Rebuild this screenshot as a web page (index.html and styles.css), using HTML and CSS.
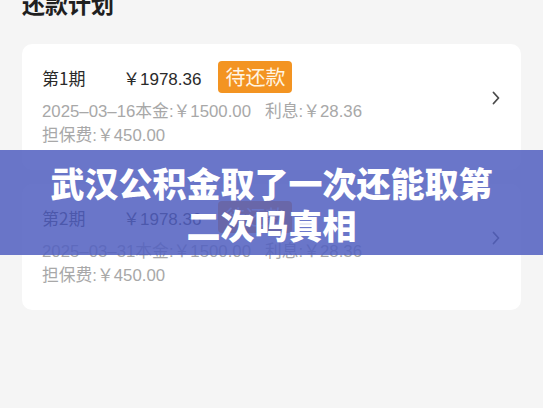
FILE: index.html
```html
<!DOCTYPE html>
<html lang="zh-CN">
<head>
    <meta charset="UTF-8">
    <meta name="viewport" content="width=device-width, initial-scale=1.0">
    <title>还款计划</title>
    <link rel="stylesheet" href="styles.css">
</head>
<body>

<main class="page">
    <h1 class="page-title">还款计划</h1>

    <!-- Repayment plan list -->
    <div class="plan-list">
        <div class="plan-card">
            <div class="plan-info">
                <div class="plan-head">
                    <span class="plan-period">第1期</span>
                    <span class="plan-amount">￥1978.36</span>
                    <span class="plan-badge">待还款</span>
                </div>
                <p class="plan-detail">2025–03–16本金:￥1500.00&nbsp;&nbsp;&nbsp;利息:￥28.36</p>
                <p class="plan-detail">担保费:￥450.00</p>
            </div>
            <svg class="chevron" width="10" height="16" viewBox="0 0 10 16">
                <path d="M2.5 2.5 L7.5 8 L2.5 13.5" fill="none" stroke="#4a4a4a" stroke-width="1.8" stroke-linecap="round" stroke-linejoin="round"/>
            </svg>
        </div>

        <div class="plan-card">
            <div class="plan-info">
                <div class="plan-head">
                    <span class="plan-period">第2期</span>
                    <span class="plan-amount">￥1978.36</span>
                    <span class="plan-badge">待还款</span>
                </div>
                <p class="plan-detail">2025–03–31本金:￥1500.00&nbsp;&nbsp;&nbsp;利息:￥28.36</p>
                <p class="plan-detail">担保费:￥450.00</p>
            </div>
            <svg class="chevron" width="10" height="16" viewBox="0 0 10 16">
                <path d="M2.5 2.5 L7.5 8 L2.5 13.5" fill="none" stroke="#4a4a4a" stroke-width="1.8" stroke-linecap="round" stroke-linejoin="round"/>
            </svg>
        </div>
    </div>
</main>

<!-- Headline banner over the screenshot -->
<div class="headline">武汉公积金取了一次还能取第二次吗真相</div>

</body>
</html>
```

FILE: styles.css
```css
body {
    margin: 0;
    padding: 0;
    background-color: #f5f5f5;
    color: #222;
    font-family: "Noto Sans CJK SC", "Noto Sans", sans-serif;
    height: 408px;
    overflow: hidden;
    position: relative;
}

.page {
    padding: 0 22px;
}

.page-title {
    margin: -13px 0 0 0;
    font-size: 23px;
    line-height: 32px;
    font-weight: bold;
    color: #1f1f1f;
}

.plan-list {
    margin-top: 25px;
    display: flex;
    flex-direction: column;
    gap: 14px;
}

.plan-card {
    background-color: #fff;
    border-radius: 10px;
    padding: 17px 20px 22px 20px;
    display: flex;
    align-items: center;
}

.plan-info {
    flex: 1;
}

.plan-head {
    display: flex;
    align-items: center;
    height: 32px;
    margin-bottom: 7px;
}

.plan-period {
    width: 81px;
    font-size: 17px;
    color: #2a2a2a;
}

.plan-amount {
    font-family: "Liberation Sans", "Noto Sans CJK SC", sans-serif;
    font-size: 17px;
    color: #2a2a2a;
    margin-right: 17px;
}

.plan-badge {
    background-color: #f39422;
    color: #fff6e6;
    font-size: 20px;
    line-height: 32px;
    padding: 0 7px;
    border-radius: 4px;
}

.plan-detail {
    margin: 0;
    font-family: "Liberation Sans", "Noto Sans CJK SC", sans-serif;
    font-size: 16.8px;
    line-height: 24px;
    color: #a8a8a8;
}

.chevron {
    flex-shrink: 0;
    margin-top: -14px;
}

.headline {
    position: absolute;
    left: 0;
    right: 0;
    top: 150px;
    height: 105px;
    box-sizing: border-box;
    padding: 12px 48px 0 48px;
    background-color: rgba(82, 96, 192, 0.86);
    color: #fff;
    font-size: 34px;
    line-height: 42px;
    font-weight: 900;
    text-align: center;
}
```
